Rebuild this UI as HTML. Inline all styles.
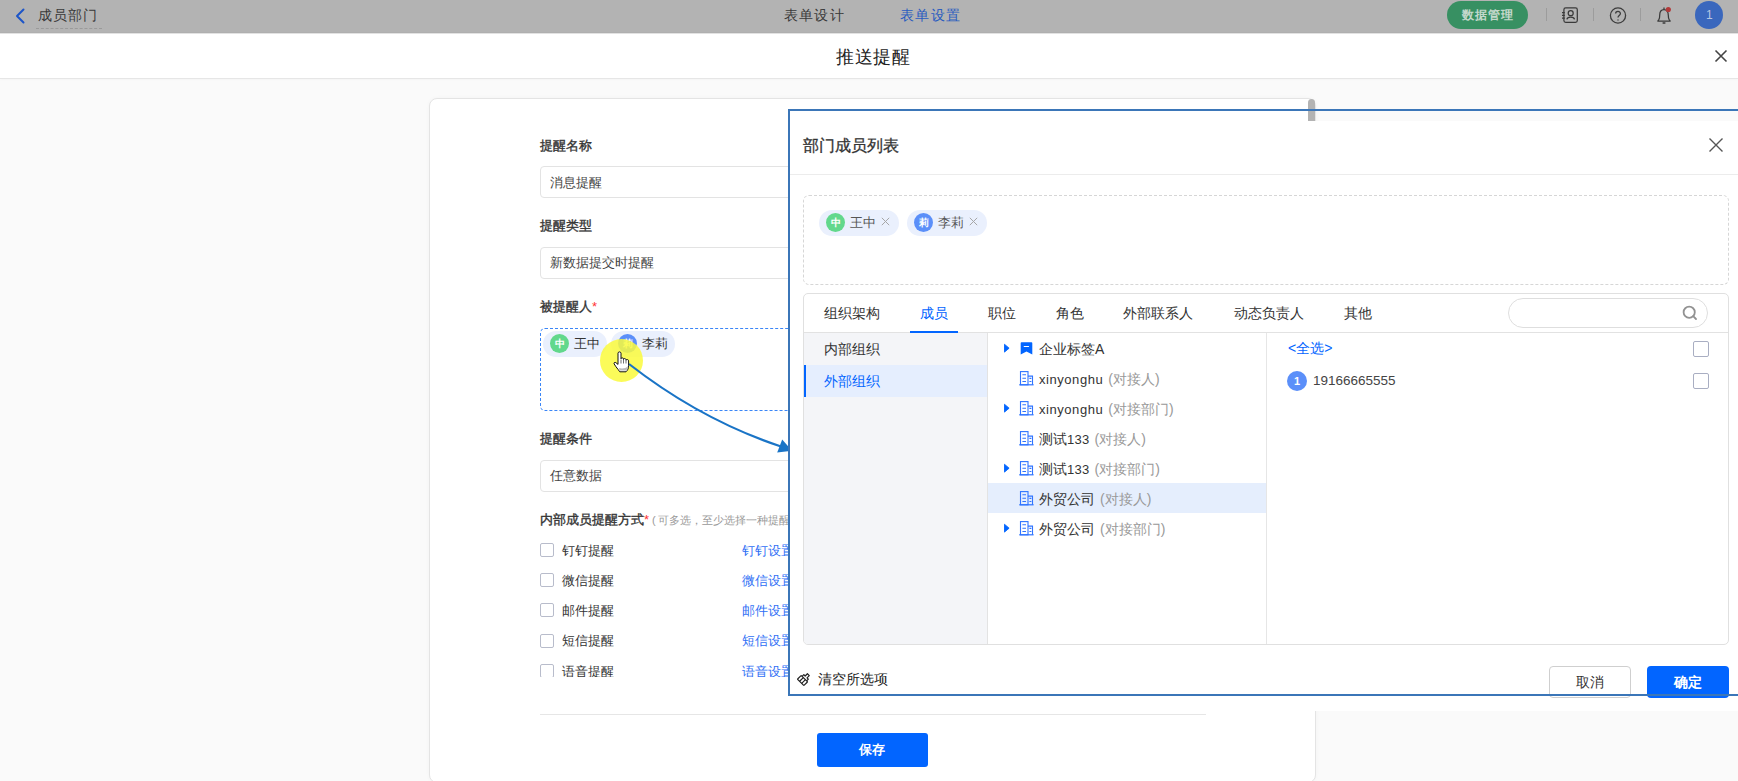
<!DOCTYPE html>
<html><head><meta charset="utf-8">
<style>
*{box-sizing:border-box;margin:0;padding:0}
html,body{width:1738px;height:781px;overflow:hidden;background:#fafafa;font-family:"Liberation Sans",sans-serif;color:#333}
.abs{position:absolute}
.t{position:absolute;white-space:nowrap;line-height:1}
#hdr{position:absolute;left:0;top:0;width:1738px;height:33px;background:#b3b3b3;border-bottom:1px solid #afafaf;box-shadow:0 1px 0 #e2e2e2;z-index:2}
#sub{position:absolute;left:0;top:32px;width:1738px;height:47px;background:#fff;border-bottom:1px solid #e6e6e6;box-shadow:0 1px 2px rgba(0,0,0,0.025)}
#card{position:absolute;left:429px;top:98px;width:887px;height:685px;background:#fff;border:1px solid #e4e4e4;border-radius:8px;box-shadow:0 0 4px rgba(0,0,0,0.03)}
.lbl{font-size:13px;color:#333;-webkit-text-stroke:0.35px #333}
.inp{position:absolute;left:540px;width:600px;height:32px;border:1px solid #e3e3e3;border-radius:4px;background:#fff}
.inpt{font-size:13px;color:#444}
.cb{position:absolute;width:14px;height:14px;border:1px solid #b8bccb;border-radius:2px;background:#fff}
.cbl{font-size:13px;color:#333}
.lnk{font-size:13px;color:#2f6ff5}
#dlg{position:absolute;left:789px;top:121px;width:949px;height:590px;background:#fff}
.tab{font-size:14px;color:#333}
.tr{font-size:14px;color:#333}
.gr{color:#999}
.chip{position:absolute;height:26px;border-radius:13px;background:#eaf0fd}
.av{position:absolute;border-radius:50%;color:#fff;text-align:center;font-weight:bold}
</style></head><body>
<div id="hdr">
  <svg class="abs" style="left:14px;top:8px" width="12" height="16" viewBox="0 0 12 16"><path d="M9.5 1.5 L3 8 L9.5 14.5" fill="none" stroke="#1c55c8" stroke-width="2" stroke-linecap="round" stroke-linejoin="round"/></svg>
  <div class="t" style="left:38px;top:8px;font-size:14px;color:#3a3a3a;letter-spacing:1px">成员部门</div>
  <div class="abs" style="left:36px;top:28px;width:66px;border-top:1px dashed #9a9a9a"></div>
  <div class="t" style="left:784px;top:8px;font-size:14px;color:#3a3a3a;letter-spacing:1.2px">表单设计</div>
  <div class="t" style="left:900px;top:8px;font-size:14px;color:#2a5cc0;letter-spacing:1.4px">表单设置</div>
  <div class="abs" style="left:1447px;top:1px;width:81px;height:28px;border-radius:14px;background:#379062"></div>
  <div class="t" style="left:1462px;top:9px;font-size:12px;color:#c4d8cc;letter-spacing:1.1px;font-weight:bold">数据管理</div>
  <div class="abs" style="left:1546px;top:8px;width:1px;height:13px;background:#9c9c9c"></div>
  <div class="abs" style="left:1593px;top:8px;width:1px;height:13px;background:#9c9c9c"></div>
  <div class="abs" style="left:1640px;top:8px;width:1px;height:13px;background:#9c9c9c"></div>
  <svg class="abs" style="left:1562px;top:7px" width="17" height="17" viewBox="0 0 17 17" fill="none" stroke="#3a3a3a" stroke-width="1.25"><rect x="1.9" y="0.9" width="13.4" height="14.5" rx="1.8"/><circle cx="8.7" cy="6.2" r="2.5"/><path d="M4.9 12.4 C5.3 9.3 12.1 9.3 12.5 12.4"/><path d="M0 5.5h2.8M0 8.3h2.8M0 11.1h2.8"/></svg>
  <svg class="abs" style="left:1609px;top:7px" width="18" height="17" viewBox="0 0 18 17" fill="none" stroke="#3d3d3d" stroke-width="1.3"><circle cx="9" cy="8.5" r="7.6"/><path d="M6.6 6.6 C6.6 3.6 11.4 3.6 11.4 6.6 C11.4 8.6 9 8.6 9 10.6"/><circle cx="9" cy="13" r="0.7" fill="#3d3d3d" stroke="none"/></svg>
  <svg class="abs" style="left:1656px;top:6px" width="17" height="19" viewBox="0 0 17 19" fill="none" stroke="#3a3a3a" stroke-width="1.25"><path d="M1.8 15 H14.2 L13.2 13.6 C12.6 12.6 12.3 11.5 12.3 9.2 C12.3 6 10.6 3.6 8 3.6 C5.4 3.6 3.7 6 3.7 9.2 C3.7 11.5 3.4 12.6 2.8 13.6 Z" stroke-linejoin="round"/><path d="M8 1.4V3.6"/><path d="M6.6 17h2.8" stroke-width="1.5"/><circle cx="12.3" cy="3.5" r="2.6" fill="#b23a3a" stroke="none"/></svg>
  <div class="abs" style="left:1695px;top:1px;width:28px;height:28px;border-radius:50%;background:#3a67bd"></div>
  <div class="t" style="left:1706px;top:9px;font-size:12px;color:#b9c6e2">1</div>
</div>
<div id="sub">
  <div class="t" style="left:836px;top:16px;font-size:18px;color:#222;letter-spacing:0.5px">推送提醒</div>
  <svg class="abs" style="left:1714px;top:17px" width="14" height="14" viewBox="0 0 14 14"><path d="M1.5 1.5L12.5 12.5M12.5 1.5L1.5 12.5" stroke="#444" stroke-width="1.6"/></svg>
</div>
<div id="card">
  <div class="abs" style="left:878px;top:0px;width:7px;height:23px;border-radius:3.5px 3.5px 0 0;background:#b3b3b3"></div>
</div>
<!-- form -->
<div class="t lbl" style="left:540px;top:139px">提醒名称</div>
<div class="inp" style="top:166px"></div>
<div class="t inpt" style="left:550px;top:176px">消息提醒</div>
<div class="t lbl" style="left:540px;top:219px">提醒类型</div>
<div class="inp" style="top:247px"></div>
<div class="t inpt" style="left:550px;top:256px">新数据提交时提醒</div>
<div class="t lbl" style="left:540px;top:300px">被提醒人<span style="color:#f33;-webkit-text-stroke:0">*</span></div>
<div class="abs" style="left:540px;top:328px;width:600px;height:83px;border:1px dashed #3b86f7;border-radius:5px"></div>
<div class="chip" style="left:543px;top:331px;width:64px"></div>
<div class="av" style="left:550px;top:334px;width:19px;height:19px;background:#62d88c;font-size:10px;line-height:19px">中</div>
<div class="t" style="left:574px;top:337px;font-size:13px;color:#333">王中</div>
<div class="chip" style="left:611px;top:331px;width:64px"></div>
<div class="av" style="left:618px;top:334px;width:19px;height:19px;background:#5b8ff9;font-size:10px;line-height:19px">莉</div>
<div class="t" style="left:642px;top:337px;font-size:13px;color:#333">李莉</div>
<div class="t lbl" style="left:540px;top:432px">提醒条件</div>
<div class="inp" style="top:460px"></div>
<div class="t inpt" style="left:550px;top:469px">任意数据</div>
<div class="t lbl" style="left:540px;top:513px">内部成员提醒方式<span style="color:#f33;-webkit-text-stroke:0">*</span><span style="font-size:11px;color:#999;-webkit-text-stroke:0"> (<span style="margin-left:2px">可多选，至少选择一种提醒方式 )</span></span></div>
<div class="cb" style="left:540px;top:543px"></div><div class="t cbl" style="left:562px;top:544px">钉钉提醒</div><div class="t lnk" style="left:742px;top:544px">钉钉设置</div>
<div class="cb" style="left:540px;top:573px"></div><div class="t cbl" style="left:562px;top:574px">微信提醒</div><div class="t lnk" style="left:742px;top:574px">微信设置</div>
<div class="cb" style="left:540px;top:603px"></div><div class="t cbl" style="left:562px;top:604px">邮件提醒</div><div class="t lnk" style="left:742px;top:604px">邮件设置</div>
<div class="cb" style="left:540px;top:634px"></div><div class="t cbl" style="left:562px;top:634px">短信提醒</div><div class="t lnk" style="left:742px;top:634px">短信设置</div>
<div class="abs" style="left:530px;top:660px;width:300px;height:17px;overflow:hidden">
  <div class="cb" style="left:10px;top:4px"></div><div class="t cbl" style="left:32px;top:5px">语音提醒</div><div class="t lnk" style="left:212px;top:5px">语音设置</div>
</div>
<div class="abs" style="left:540px;top:714px;width:666px;height:1px;background:#e6e6e6"></div>
<div class="abs" style="left:817px;top:733px;width:111px;height:34px;border-radius:3px;background:#0265ff"></div>
<div class="t" style="left:859px;top:743px;font-size:13px;color:#fff;font-weight:bold">保存</div>
<!-- cursor highlight & arrow -->
<div class="abs" style="left:600px;top:339px;width:43px;height:43px;border-radius:50%;background:rgba(250,250,60,0.85)"></div>
<svg class="abs" style="left:0;top:0" width="1738" height="781"><path d="M629 364 Q701 420 781 446.5" fill="none" stroke="#1a74c6" stroke-width="2.2"/><path d="M792 450.8 L782.2 439.6 L777.2 452.6 Z" fill="#1a74c6"/></svg>
<svg class="abs" style="left:613px;top:351px" width="17" height="22" viewBox="0 0 17 22"><path d="M5 10 V2.2 C5 0.4 8 0.4 8 2.2 V7.8 C8 6.5 10.5 6.5 10.5 8 V8.5 C10.5 7.2 13 7.2 13 8.8 V9.3 C13 8.2 15.6 8.2 15.6 9.8 V14.8 C15.6 17.5 14.5 19.5 13 20.8 H6.8 C5.8 19.3 4.6 17.8 3 15.8 L1.2 13 C0.5 11.8 1.8 10.8 2.8 11.6 L5 13.4 Z" fill="#fff" stroke="#111" stroke-width="1"/><path d="M8 8.5V12.5M10.5 9V12.5M13 9.5V12.5" stroke="#333" stroke-width="0.7"/><path d="M6.5 19.5 H13 C14 18.5 15 17 15.2 15 C13 17.5 9 18 6 17 Z" fill="#bbb"/></svg>

<div id="dlg">
  <div class="t" style="left:14px;top:17px;font-size:16px;color:#333;-webkit-text-stroke:0.3px #333">部门成员列表</div>
  <svg class="abs" style="left:919px;top:16px" width="16" height="16" viewBox="0 0 16 16"><path d="M1.5 1.5L14.5 14.5M14.5 1.5L1.5 14.5" stroke="#555" stroke-width="1.4"/></svg>
  <div class="abs" style="left:0;top:53px;width:949px;height:1px;background:#ececec"></div>
  <div class="abs" style="left:14px;top:74px;width:926px;height:90px;border:1px dashed #d6d6d6;border-radius:6px"></div>
  <div class="chip" style="left:30px;top:89px;width:80px"></div>
  <div class="av" style="left:37px;top:92px;width:19px;height:19px;background:#62d88c;font-size:10px;line-height:19px">中</div>
  <div class="t" style="left:61px;top:95px;font-size:13px;color:#555">王中</div>
  <svg class="abs" style="left:92px;top:96px" width="9" height="9" viewBox="0 0 9 9"><path d="M0.8 0.8L8.2 8.2M8.2 0.8L0.8 8.2" stroke="#a6a6a6" stroke-width="1"/></svg>
  <div class="chip" style="left:118px;top:89px;width:80px"></div>
  <div class="av" style="left:125px;top:92px;width:19px;height:19px;background:#5b8ff9;font-size:10px;line-height:19px">莉</div>
  <div class="t" style="left:149px;top:95px;font-size:13px;color:#555">李莉</div>
  <svg class="abs" style="left:180px;top:96px" width="9" height="9" viewBox="0 0 9 9"><path d="M0.8 0.8L8.2 8.2M8.2 0.8L0.8 8.2" stroke="#a6a6a6" stroke-width="1"/></svg>
  <!-- panel -->
  <div class="abs" style="left:14px;top:172px;width:926px;height:352px;border:1px solid #e0e0e0;border-radius:5px;overflow:hidden">
    <div class="abs" style="left:0;top:38px;width:924px;height:1px;background:#e2e2e2"></div>
    <div class="t tab" style="left:20px;top:12px">组织架构</div>
    <div class="t tab" style="left:116px;top:12px;color:#0265ff">成员</div>
    <div class="abs" style="left:106px;top:37px;width:48px;height:2px;background:#0265ff"></div>
    <div class="t tab" style="left:184px;top:12px">职位</div>
    <div class="t tab" style="left:252px;top:12px">角色</div>
    <div class="t tab" style="left:319px;top:12px">外部联系人</div>
    <div class="t tab" style="left:430px;top:12px">动态负责人</div>
    <div class="t tab" style="left:540px;top:12px">其他</div>
    <div class="abs" style="left:704px;top:4px;width:200px;height:30px;border:1px solid #dedede;border-radius:15px"></div>
    <svg class="abs" style="left:878px;top:11px" width="16" height="16" viewBox="0 0 16 16" fill="none" stroke="#929292" stroke-width="1.8"><circle cx="7.2" cy="7.2" r="5.6"/><path d="M11.2 11.2L14 14" stroke-linecap="round"/></svg>
    <div class="abs" style="left:0;top:39px;width:184px;height:320px;background:#f4f5f8;border-right:1px solid #e3e3e3"></div>
    <div class="t tab" style="left:20px;top:48px">内部组织</div>
    <div class="abs" style="left:0;top:71px;width:183px;height:32px;background:#e5eefe"></div>
    <div class="abs" style="left:0;top:71px;width:2px;height:32px;background:#0265ff"></div>
    <div class="t tab" style="left:20px;top:80px;color:#0265ff">外部组织</div>
    <div class="abs" style="left:462px;top:39px;width:1px;height:320px;background:#e6e6e6"></div>
    <div class="abs" style="left:184px;top:189px;width:278px;height:30px;background:#e5eefd"></div>
  </div>
</div>

<svg class="abs" style="left:1003px;top:343px" width="8" height="11" viewBox="0 0 8 11"><path d="M1.5 1.3 L6.1 5.2 L1.5 9.1 Z" fill="#0265ff" stroke="#0265ff" stroke-width="0.9" stroke-linejoin="round"/></svg>
<svg class="abs" style="left:1020px;top:342px" width="13" height="13" viewBox="0 0 13 13"><path d="M1.5 0.3 H11.5 A1 1 0 0 1 12.3 1.3 V12.4 L6.5 9.6 L0.7 12.4 V1.3 A1 1 0 0 1 1.5 0.3 Z" fill="#0265ff"/><path d="M4.2 4.5H8.6" stroke="#fff" stroke-width="1.1" stroke-linecap="round"/></svg>
<div class="t tr" style="left:1039px;top:342px">企业标签A</div>
<svg class="abs" style="left:1019px;top:371px" width="15" height="15" viewBox="0 0 15 15" fill="none" stroke="#2f74ff" stroke-width="1.1"><rect x="1.5" y="0.6" width="7.5" height="13.2"/><path d="M9 5.1h4.5v8.7"/><path d="M0.2 13.8h14.4" stroke-width="1.2"/><path d="M3.4 3.8h3.6M3.4 7.2h3.6M3.4 10.5h3.6M10.4 7.4h2M10.4 10.5h2" stroke-width="1.1"/></svg>
<div class="t tr" style="left:1039px;top:372px"><span style="font-size:13px;letter-spacing:0.55px">xinyonghu</span><span class="gr" style="margin-left:5px">(对接人)</span></div>
<svg class="abs" style="left:1003px;top:403px" width="8" height="11" viewBox="0 0 8 11"><path d="M1.5 1.3 L6.1 5.2 L1.5 9.1 Z" fill="#0265ff" stroke="#0265ff" stroke-width="0.9" stroke-linejoin="round"/></svg>
<svg class="abs" style="left:1019px;top:401px" width="15" height="15" viewBox="0 0 15 15" fill="none" stroke="#2f74ff" stroke-width="1.1"><rect x="1.5" y="0.6" width="7.5" height="13.2"/><path d="M9 5.1h4.5v8.7"/><path d="M0.2 13.8h14.4" stroke-width="1.2"/><path d="M3.4 3.8h3.6M3.4 7.2h3.6M3.4 10.5h3.6M10.4 7.4h2M10.4 10.5h2" stroke-width="1.1"/></svg>
<div class="t tr" style="left:1039px;top:402px"><span style="font-size:13px;letter-spacing:0.55px">xinyonghu</span><span class="gr" style="margin-left:5px">(对接部门)</span></div>
<svg class="abs" style="left:1019px;top:431px" width="15" height="15" viewBox="0 0 15 15" fill="none" stroke="#2f74ff" stroke-width="1.1"><rect x="1.5" y="0.6" width="7.5" height="13.2"/><path d="M9 5.1h4.5v8.7"/><path d="M0.2 13.8h14.4" stroke-width="1.2"/><path d="M3.4 3.8h3.6M3.4 7.2h3.6M3.4 10.5h3.6M10.4 7.4h2M10.4 10.5h2" stroke-width="1.1"/></svg>
<div class="t tr" style="left:1039px;top:432px">测试<span style="font-size:13px;letter-spacing:0.3px">133</span><span class="gr" style="margin-left:5px">(对接人)</span></div>
<svg class="abs" style="left:1003px;top:463px" width="8" height="11" viewBox="0 0 8 11"><path d="M1.5 1.3 L6.1 5.2 L1.5 9.1 Z" fill="#0265ff" stroke="#0265ff" stroke-width="0.9" stroke-linejoin="round"/></svg>
<svg class="abs" style="left:1019px;top:461px" width="15" height="15" viewBox="0 0 15 15" fill="none" stroke="#2f74ff" stroke-width="1.1"><rect x="1.5" y="0.6" width="7.5" height="13.2"/><path d="M9 5.1h4.5v8.7"/><path d="M0.2 13.8h14.4" stroke-width="1.2"/><path d="M3.4 3.8h3.6M3.4 7.2h3.6M3.4 10.5h3.6M10.4 7.4h2M10.4 10.5h2" stroke-width="1.1"/></svg>
<div class="t tr" style="left:1039px;top:462px">测试<span style="font-size:13px;letter-spacing:0.3px">133</span><span class="gr" style="margin-left:5px">(对接部门)</span></div>
<svg class="abs" style="left:1019px;top:491px" width="15" height="15" viewBox="0 0 15 15" fill="none" stroke="#2f74ff" stroke-width="1.1"><rect x="1.5" y="0.6" width="7.5" height="13.2"/><path d="M9 5.1h4.5v8.7"/><path d="M0.2 13.8h14.4" stroke-width="1.2"/><path d="M3.4 3.8h3.6M3.4 7.2h3.6M3.4 10.5h3.6M10.4 7.4h2M10.4 10.5h2" stroke-width="1.1"/></svg>
<div class="t tr" style="left:1039px;top:492px">外贸公司<span class="gr" style="margin-left:5px">(对接人)</span></div>
<svg class="abs" style="left:1003px;top:523px" width="8" height="11" viewBox="0 0 8 11"><path d="M1.5 1.3 L6.1 5.2 L1.5 9.1 Z" fill="#0265ff" stroke="#0265ff" stroke-width="0.9" stroke-linejoin="round"/></svg>
<svg class="abs" style="left:1019px;top:521px" width="15" height="15" viewBox="0 0 15 15" fill="none" stroke="#2f74ff" stroke-width="1.1"><rect x="1.5" y="0.6" width="7.5" height="13.2"/><path d="M9 5.1h4.5v8.7"/><path d="M0.2 13.8h14.4" stroke-width="1.2"/><path d="M3.4 3.8h3.6M3.4 7.2h3.6M3.4 10.5h3.6M10.4 7.4h2M10.4 10.5h2" stroke-width="1.1"/></svg>
<div class="t tr" style="left:1039px;top:522px">外贸公司<span class="gr" style="margin-left:5px">(对接部门)</span></div>
<div class="t" style="left:1288px;top:341px;font-size:14px;color:#0265ff">&lt;全选&gt;</div>
<div class="cb" style="left:1693px;top:341px;width:16px;height:16px;border-color:#a9aec2"></div>
<div class="av" style="left:1287px;top:371px;width:20px;height:20px;background:#5b8ff9;font-size:11px;line-height:20px;font-family:'Liberation Sans',sans-serif">1</div>
<div class="t" style="left:1313px;top:374px;font-size:13.5px;color:#444">19166665555</div>
<div class="cb" style="left:1693px;top:373px;width:16px;height:16px;border-color:#a9aec2"></div>
<svg class="abs" style="left:797px;top:671px" width="15" height="15" viewBox="0 0 16 16"><g transform="rotate(45 8 8)" fill="none" stroke="#222" stroke-width="1.3" stroke-linejoin="round"><rect x="3.2" y="8.2" width="9.6" height="5.6" rx="0.6"/><path d="M6.4 8.2V13.8M9.6 8.2V13.8"/><path d="M4.6 8.2V5.6H6.6V2.2H9.4V5.6H11.4V8.2"/></g></svg>
<div class="t" style="left:818px;top:672px;font-size:14px;color:#222">清空所选项</div>
<div class="abs" style="left:1549px;top:666px;width:82px;height:32px;border:1px solid #cfcfcf;border-radius:4px;background:#fff"></div>
<div class="t" style="left:1576px;top:675px;font-size:14px;color:#333">取消</div>
<div class="abs" style="left:1647px;top:666px;width:82px;height:32px;border-radius:4px;background:#0265ff"></div>
<div class="t" style="left:1674px;top:675px;font-size:14px;color:#fff;font-weight:bold">确定</div>
<div class="abs" style="left:788px;top:109px;width:960px;height:587px;border:2px solid #3b76b8"></div>
</body></html>
